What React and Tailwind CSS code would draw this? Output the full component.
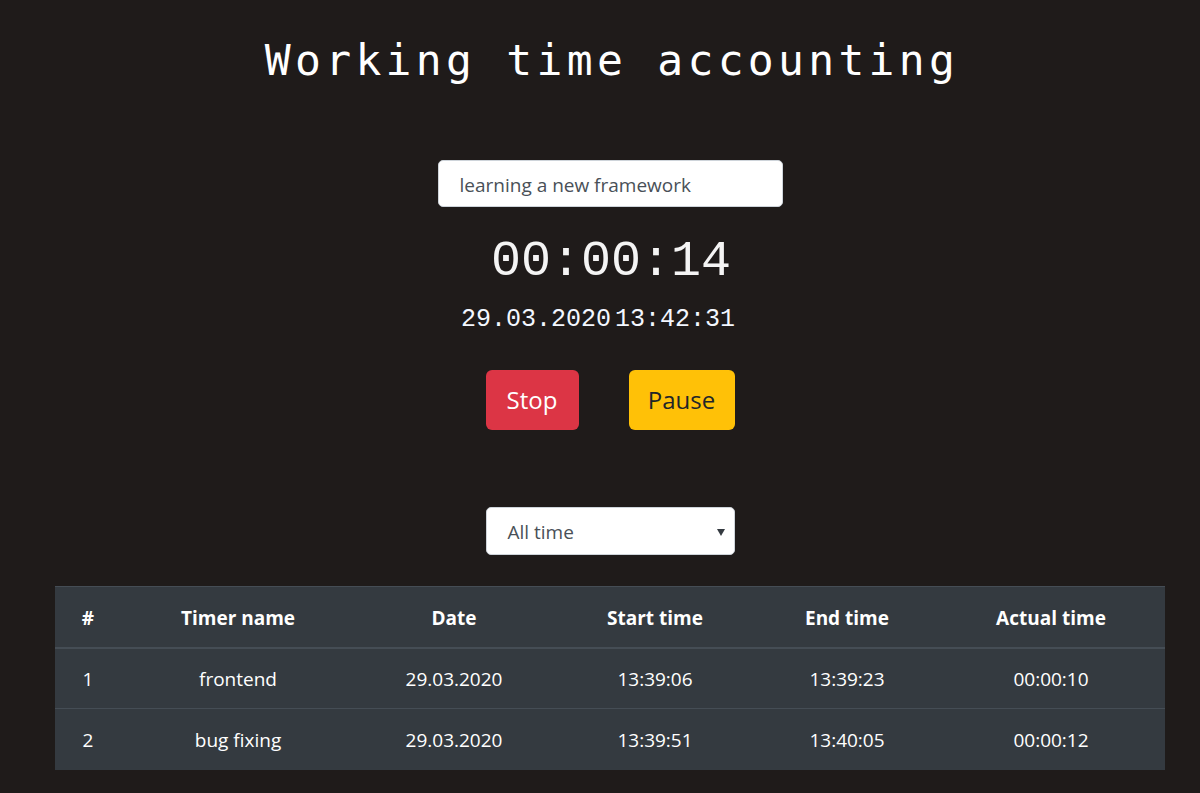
import React from "react";

const rows = [
  { n: 1, name: "frontend", date: "29.03.2020", start: "13:39:06", end: "13:39:23", actual: "00:00:10" },
  { n: 2, name: "bug fixing", date: "29.03.2020", start: "13:39:51", end: "13:40:05", actual: "00:00:12" },
];

export default function App() {
  return (
    <div className="min-h-screen bg-[#1f1b1a] font-['Open_Sans',sans-serif] text-white">
      <div className="ml-[55px] w-[1110px] flex flex-col items-center pt-[30px] pb-[23px]">
        <h1 className="text-[43px] leading-[60px] tracking-[4.3px] pl-[4px] font-['DejaVu_Sans_Mono',monospace] font-normal text-white">
          Working time accounting
        </h1>

        <input
          readOnly
          value="learning a new framework"
          className="mt-[70px] w-[345px] h-[47px] rounded-[5px] border border-[#ced4da] bg-white pl-[21px] pr-[15px] pt-[2px] text-[19px] text-[#495057] outline-none font-['Open_Sans',sans-serif]"
        />

        <div className="mt-[25px] pl-[2px] text-[50px] leading-[60px] font-['Liberation_Mono',monospace] text-[#f4f4f4]">
          00:00:14
        </div>

        <div className="mt-[13px] pr-[24px] flex gap-[4px] text-[25px] leading-[30px] font-['Liberation_Mono',monospace] text-[#f3f7ff]">
          <span>29.03.2020</span>
          <span>13:42:31</span>
        </div>

        <div className="mt-[35px] flex gap-[50px]">
          <button className="w-[93px] h-[60px] rounded-[6px] bg-[#dc3545] text-white text-[24px] leading-[36px]">
            Stop
          </button>
          <button className="w-[106px] h-[60px] rounded-[6px] bg-[#ffc107] text-[#212529] text-[24px] leading-[36px]">
            Pause
          </button>
        </div>

        <div className="mt-[77px] relative w-[249px] h-[48px] rounded-[5px] border border-[#ced4da] bg-white flex items-center pl-[21px] pt-[3px]">
          <span className="text-[19px] text-[#495057]">All time</span>
          <svg className="absolute right-[9px] top-[21px]" width="8" height="7" viewBox="0 0 8 7">
            <path d="M0 0 H8 L4 7 Z" fill="#343a40" />
          </svg>
        </div>

        <table className="mt-[31px] w-[1110px] bg-[#343a40] border-t border-[#454d55] text-[19px] text-white border-collapse">
          <thead>
            <tr className="border-b-2 border-[#454d55]">
              <th className="w-[66px] h-[61px] pt-[2px] font-bold text-center">#</th>
              <th className="w-[234px] pt-[2px] font-bold text-center">Timer name</th>
              <th className="w-[198px] pt-[2px] font-bold text-center">Date</th>
              <th className="w-[204px] pt-[2px] font-bold text-center">Start time</th>
              <th className="w-[180px] pt-[2px] font-bold text-center">End time</th>
              <th className="w-[228px] pt-[2px] font-bold text-center">Actual time</th>
            </tr>
          </thead>
          <tbody>
            {rows.map((r, i) => (
              <tr key={r.n} className={i > 0 ? "border-t border-[#454d55]" : ""}>
                <td className="h-[61px] pt-[2px] text-center">{r.n}</td>
                <td className="pt-[2px] text-center">{r.name}</td>
                <td className="pt-[2px] text-center">{r.date}</td>
                <td className="pt-[2px] text-center">{r.start}</td>
                <td className="pt-[2px] text-center">{r.end}</td>
                <td className="pt-[2px] text-center">{r.actual}</td>
              </tr>
            ))}
          </tbody>
        </table>
      </div>
    </div>
  );
}
